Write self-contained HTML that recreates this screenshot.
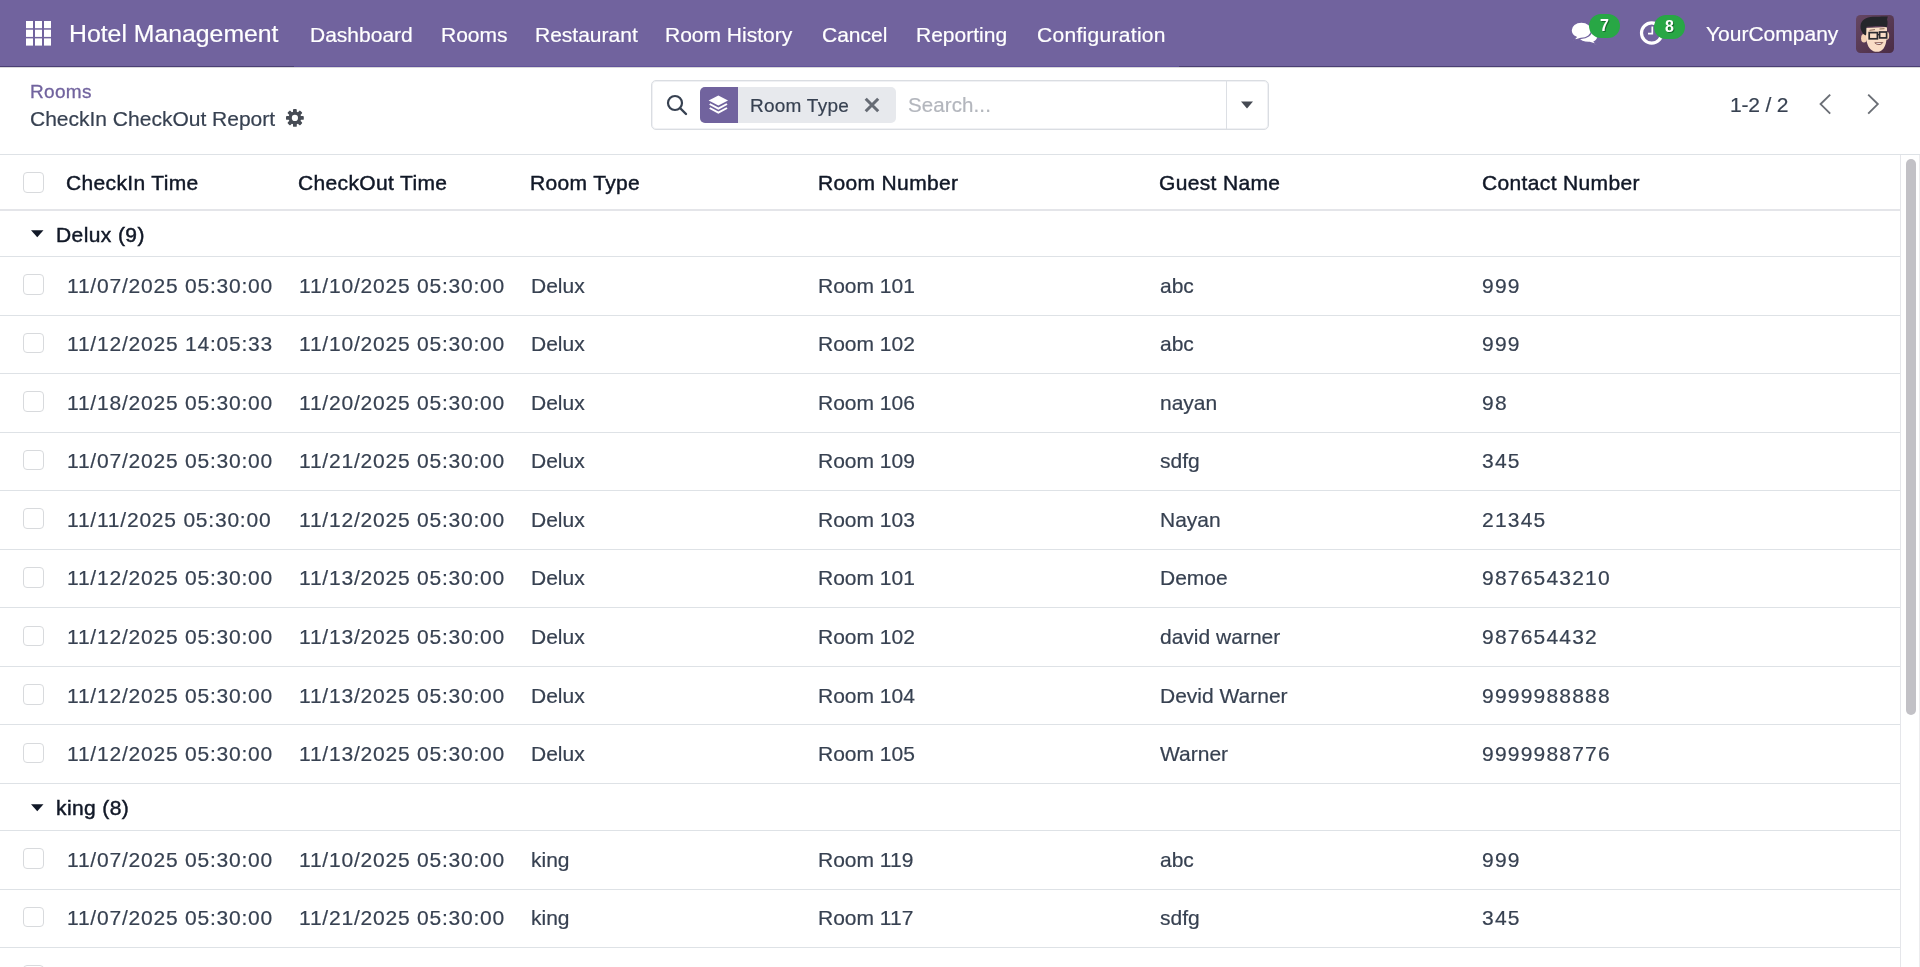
<!DOCTYPE html>
<html><head><meta charset="utf-8">
<style>
html,body{margin:0;padding:0;}
body{width:1920px;height:967px;overflow:hidden;position:relative;background:#fff;font-family:"Liberation Sans",sans-serif;color:#374151;}
.t{position:absolute;line-height:1;white-space:nowrap;will-change:transform;-webkit-text-stroke-width:0.2px;}
#nav{position:absolute;left:0;top:0;width:1920px;height:66px;background:#71639e;}
#navline{position:absolute;left:0;top:66px;width:1920px;height:1px;background:#4a3f74;}
#navshadow{position:absolute;left:0;top:67px;width:1920px;height:1px;background:#d9d9da;}
.cb{position:absolute;left:23px;width:18.6px;height:18.6px;border:1px solid #d8dadd;border-radius:4px;background:#fff;}
.hd{-webkit-text-stroke:0.45px #111827;}
.gp{-webkit-text-stroke:0.45px #111827;}
.badge{position:absolute;will-change:transform;width:31px;height:24px;border-radius:12px;background:#28a745;color:#fff;font-weight:bold;font-size:16px;line-height:24px;text-align:center;text-shadow:1px 1px 0 #146c2b;}
</style></head><body>
<div id="nav"></div><div id="navline"></div><div id="navshadow"></div><div style="position:absolute;left:294px;top:66px;width:885px;height:1px;background:#62549a;"></div>
<svg style="position:absolute;left:26px;top:21px" width="25" height="25" viewBox="0 0 25 25"><rect x="0" y="0.0" width="7" height="7.2" fill="#fff"/><rect x="9" y="0.0" width="7" height="7.2" fill="#fff"/><rect x="18" y="0.0" width="7" height="7.2" fill="#fff"/><rect x="0" y="8.7" width="7" height="7.2" fill="#fff"/><rect x="9" y="8.7" width="7" height="7.2" fill="#fff"/><rect x="18" y="8.7" width="7" height="7.2" fill="#fff"/><rect x="0" y="17.4" width="7" height="7.2" fill="#fff"/><rect x="9" y="17.4" width="7" height="7.2" fill="#fff"/><rect x="18" y="17.4" width="7" height="7.2" fill="#fff"/></svg>
<div class="t " style="left:68.90px;top:21.50px;font-size:24.8px;color:#fff;">Hotel Management</div>
<div class="t " style="left:309.50px;top:23.72px;font-size:21px;color:#fff;">Dashboard</div>
<div class="t " style="left:441.20px;top:23.72px;font-size:21px;color:#fff;">Rooms</div>
<div class="t " style="left:534.50px;top:23.72px;font-size:21px;color:#fff;">Restaurant</div>
<div class="t " style="left:665.30px;top:23.72px;font-size:21px;color:#fff;">Room History</div>
<div class="t " style="left:821.80px;top:23.72px;font-size:21px;color:#fff;">Cancel</div>
<div class="t " style="left:915.80px;top:23.72px;font-size:21px;color:#fff;">Reporting</div>
<div class="t " style="left:1036.80px;top:23.72px;font-size:21px;color:#fff;letter-spacing:0.3px;">Configuration</div>
<div class="t " style="left:1705.50px;top:23.22px;font-size:21px;color:#fff;">YourCompany</div>
<div class="t " style="left:29.50px;top:82.01px;font-size:19px;color:#71639e;letter-spacing:0.3px;-webkit-text-stroke:0.3px #71639e;">Rooms</div>
<div class="t " style="left:29.50px;top:107.52px;font-size:21px;color:#374151;">CheckIn CheckOut Report</div>
<svg style="position:absolute;left:280px;top:104px" width="30" height="28" viewBox="0 0 30 28"><g transform="translate(14.9 13.9)" fill="#474c55"><circle r="6.4"/><rect x="-1.9" y="-8.9" width="3.8" height="5" rx="0.9" transform="rotate(0)"/><rect x="-1.9" y="-8.9" width="3.8" height="5" rx="0.9" transform="rotate(45)"/><rect x="-1.9" y="-8.9" width="3.8" height="5" rx="0.9" transform="rotate(90)"/><rect x="-1.9" y="-8.9" width="3.8" height="5" rx="0.9" transform="rotate(135)"/><rect x="-1.9" y="-8.9" width="3.8" height="5" rx="0.9" transform="rotate(180)"/><rect x="-1.9" y="-8.9" width="3.8" height="5" rx="0.9" transform="rotate(225)"/><rect x="-1.9" y="-8.9" width="3.8" height="5" rx="0.9" transform="rotate(270)"/><rect x="-1.9" y="-8.9" width="3.8" height="5" rx="0.9" transform="rotate(315)"/></g><circle cx="14.9" cy="13.9" r="3.1" fill="#fff"/></svg>
<div style="position:absolute;left:651px;top:79.5px;width:616px;height:48.5px;border:1px solid #dadde2;border-radius:5px;background:#fff;box-shadow:inset 0 0 0 1px #f0f1f4;"></div>
<div style="position:absolute;left:1225.5px;top:80px;width:1.5px;height:49px;background:#dcdfe4;"></div>
<svg style="position:absolute;left:666px;top:94px" width="22" height="22" viewBox="0 0 22 22"><circle cx="9" cy="9" r="7" fill="none" stroke="#374151" stroke-width="2.2"/><line x1="14" y1="14" x2="20" y2="20" stroke="#374151" stroke-width="2.4" stroke-linecap="round"/></svg>
<div style="position:absolute;left:699.5px;top:87px;width:196px;height:36px;border-radius:5px;background:#e7e9ed;overflow:hidden;"><div style="position:absolute;left:0;top:0;width:38.5px;height:36px;background:#71639e;"></div></div>
<svg style="position:absolute;left:707.2px;top:94px" width="22.7" height="21" viewBox="0 0 21 21" preserveAspectRatio="none"><path fill="#fff" d="M10.5 1.5 L19.5 6.5 L10.5 11.5 L1.5 6.5 Z"/><path fill="none" stroke="#fff" stroke-width="2" d="M2.5 10 L10.5 14.5 L18.5 10"/><path fill="none" stroke="#fff" stroke-width="2" d="M2.5 14 L10.5 18.5 L18.5 14"/></svg>
<div class="t " style="left:749.50px;top:95.61px;font-size:19px;color:#374151;letter-spacing:0.25px;">Room Type</div>
<svg style="position:absolute;left:864.3px;top:96.8px" width="16" height="16" viewBox="0 0 16 16"><path d="M1.7 1.7 L14.2 14.2 M14.2 1.7 L1.7 14.2" stroke="#666b74" stroke-width="3"/></svg>
<div class="t " style="left:907.80px;top:95.14px;font-size:20.5px;color:#b3b6bd;letter-spacing:0.1px;">Search...</div>
<svg style="position:absolute;left:1241px;top:101px" width="12" height="8" viewBox="0 0 12 8"><path d="M0 0.5 L12 0.5 L6 7.5 Z" fill="#454a53"/></svg>
<div class="t " style="left:1729.50px;top:93.72px;font-size:21px;color:#374151;letter-spacing:-0.2px;">1-2 / 2</div>
<svg style="position:absolute;left:1818px;top:93px" width="14" height="22" viewBox="0 0 14 22"><path d="M12.2 1.6 L2.6 11.1 L12.2 20.6" fill="none" stroke="#6b6f76" stroke-width="1.9"/></svg>
<svg style="position:absolute;left:1866px;top:93px" width="14" height="22" viewBox="0 0 14 22"><path d="M2.2 1.6 L11.8 11.1 L2.2 20.6" fill="none" stroke="#6b6f76" stroke-width="1.9"/></svg>
<div style="position:absolute;left:0;top:154px;width:1920px;height:1px;background:#dee2e6;"></div>
<div style="position:absolute;left:0;top:153px;width:1920px;height:1px;background:#fff;"></div>
<div style="position:absolute;left:0;top:209px;width:1900px;height:2px;background:#e4e5e9;"></div>
<div class="cb" style="top:172.00px"></div>
<div class="t hd" style="left:66.00px;top:172.22px;font-size:21px;color:#111827;letter-spacing:0.35px;">CheckIn Time</div>
<div class="t hd" style="left:298.00px;top:172.22px;font-size:21px;color:#111827;letter-spacing:0.35px;">CheckOut Time</div>
<div class="t hd" style="left:530.00px;top:172.22px;font-size:21px;color:#111827;letter-spacing:0.35px;">Room Type</div>
<div class="t hd" style="left:818.20px;top:172.22px;font-size:21px;color:#111827;letter-spacing:0.35px;">Room Number</div>
<div class="t hd" style="left:1159.20px;top:172.22px;font-size:21px;color:#111827;letter-spacing:0.35px;">Guest Name</div>
<div class="t hd" style="left:1482.20px;top:172.22px;font-size:21px;color:#111827;letter-spacing:0.35px;">Contact Number</div>
<svg style="position:absolute;left:30.5px;top:230px" width="13" height="8" viewBox="0 0 13 8"><path d="M0 0.3 L12.5 0.3 L6.25 7.3 Z" fill="#111827"/></svg><div class="t gp" style="left:56.00px;top:223.82px;font-size:21px;color:#111827;letter-spacing:0.4px;">Delux (9)</div>
<div style="position:absolute;left:0;top:256px;width:1900px;height:1px;background:#dee2e6;"></div>
<div class="cb" style="top:274.20px"></div>
<div class="t " style="left:67.00px;top:274.62px;font-size:21px;color:#374151;letter-spacing:0.78px;">11/07/2025 05:30:00</div>
<div class="t " style="left:299.00px;top:274.62px;font-size:21px;color:#374151;letter-spacing:0.78px;">11/10/2025 05:30:00</div>
<div class="t " style="left:530.50px;top:274.62px;font-size:21px;color:#374151;">Delux</div>
<div class="t " style="left:818.20px;top:274.62px;font-size:21px;color:#374151;">Room 101</div>
<div class="t " style="left:1159.50px;top:274.62px;font-size:21px;color:#374151;">abc</div>
<div class="t " style="left:1482.20px;top:274.62px;font-size:21px;color:#374151;letter-spacing:1.2px;">999</div>
<div style="position:absolute;left:0;top:315px;width:1900px;height:1px;background:#dee2e6;"></div>
<div class="cb" style="top:332.76px"></div>
<div class="t " style="left:67.00px;top:333.18px;font-size:21px;color:#374151;letter-spacing:0.78px;">11/12/2025 14:05:33</div>
<div class="t " style="left:299.00px;top:333.18px;font-size:21px;color:#374151;letter-spacing:0.78px;">11/10/2025 05:30:00</div>
<div class="t " style="left:530.50px;top:333.18px;font-size:21px;color:#374151;">Delux</div>
<div class="t " style="left:818.20px;top:333.18px;font-size:21px;color:#374151;">Room 102</div>
<div class="t " style="left:1159.50px;top:333.18px;font-size:21px;color:#374151;">abc</div>
<div class="t " style="left:1482.20px;top:333.18px;font-size:21px;color:#374151;letter-spacing:1.2px;">999</div>
<div style="position:absolute;left:0;top:373px;width:1900px;height:1px;background:#dee2e6;"></div>
<div class="cb" style="top:391.32px"></div>
<div class="t " style="left:67.00px;top:391.74px;font-size:21px;color:#374151;letter-spacing:0.78px;">11/18/2025 05:30:00</div>
<div class="t " style="left:299.00px;top:391.74px;font-size:21px;color:#374151;letter-spacing:0.78px;">11/20/2025 05:30:00</div>
<div class="t " style="left:530.50px;top:391.74px;font-size:21px;color:#374151;">Delux</div>
<div class="t " style="left:818.20px;top:391.74px;font-size:21px;color:#374151;">Room 106</div>
<div class="t " style="left:1159.50px;top:391.74px;font-size:21px;color:#374151;">nayan</div>
<div class="t " style="left:1482.20px;top:391.74px;font-size:21px;color:#374151;letter-spacing:1.2px;">98</div>
<div style="position:absolute;left:0;top:432px;width:1900px;height:1px;background:#dee2e6;"></div>
<div class="cb" style="top:449.88px"></div>
<div class="t " style="left:67.00px;top:450.30px;font-size:21px;color:#374151;letter-spacing:0.78px;">11/07/2025 05:30:00</div>
<div class="t " style="left:299.00px;top:450.30px;font-size:21px;color:#374151;letter-spacing:0.78px;">11/21/2025 05:30:00</div>
<div class="t " style="left:530.50px;top:450.30px;font-size:21px;color:#374151;">Delux</div>
<div class="t " style="left:818.20px;top:450.30px;font-size:21px;color:#374151;">Room 109</div>
<div class="t " style="left:1159.50px;top:450.30px;font-size:21px;color:#374151;">sdfg</div>
<div class="t " style="left:1482.20px;top:450.30px;font-size:21px;color:#374151;letter-spacing:1.2px;">345</div>
<div style="position:absolute;left:0;top:490px;width:1900px;height:1px;background:#dee2e6;"></div>
<div class="cb" style="top:508.44px"></div>
<div class="t " style="left:67.00px;top:508.86px;font-size:21px;color:#374151;letter-spacing:0.78px;">11/11/2025 05:30:00</div>
<div class="t " style="left:299.00px;top:508.86px;font-size:21px;color:#374151;letter-spacing:0.78px;">11/12/2025 05:30:00</div>
<div class="t " style="left:530.50px;top:508.86px;font-size:21px;color:#374151;">Delux</div>
<div class="t " style="left:818.20px;top:508.86px;font-size:21px;color:#374151;">Room 103</div>
<div class="t " style="left:1159.50px;top:508.86px;font-size:21px;color:#374151;">Nayan</div>
<div class="t " style="left:1482.20px;top:508.86px;font-size:21px;color:#374151;letter-spacing:1.2px;">21345</div>
<div style="position:absolute;left:0;top:549px;width:1900px;height:1px;background:#dee2e6;"></div>
<div class="cb" style="top:567.00px"></div>
<div class="t " style="left:67.00px;top:567.42px;font-size:21px;color:#374151;letter-spacing:0.78px;">11/12/2025 05:30:00</div>
<div class="t " style="left:299.00px;top:567.42px;font-size:21px;color:#374151;letter-spacing:0.78px;">11/13/2025 05:30:00</div>
<div class="t " style="left:530.50px;top:567.42px;font-size:21px;color:#374151;">Delux</div>
<div class="t " style="left:818.20px;top:567.42px;font-size:21px;color:#374151;">Room 101</div>
<div class="t " style="left:1159.50px;top:567.42px;font-size:21px;color:#374151;">Demoe</div>
<div class="t " style="left:1482.20px;top:567.42px;font-size:21px;color:#374151;letter-spacing:1.2px;">9876543210</div>
<div style="position:absolute;left:0;top:607px;width:1900px;height:1px;background:#dee2e6;"></div>
<div class="cb" style="top:625.56px"></div>
<div class="t " style="left:67.00px;top:625.98px;font-size:21px;color:#374151;letter-spacing:0.78px;">11/12/2025 05:30:00</div>
<div class="t " style="left:299.00px;top:625.98px;font-size:21px;color:#374151;letter-spacing:0.78px;">11/13/2025 05:30:00</div>
<div class="t " style="left:530.50px;top:625.98px;font-size:21px;color:#374151;">Delux</div>
<div class="t " style="left:818.20px;top:625.98px;font-size:21px;color:#374151;">Room 102</div>
<div class="t " style="left:1159.50px;top:625.98px;font-size:21px;color:#374151;">david warner</div>
<div class="t " style="left:1482.20px;top:625.98px;font-size:21px;color:#374151;letter-spacing:1.2px;">987654432</div>
<div style="position:absolute;left:0;top:666px;width:1900px;height:1px;background:#dee2e6;"></div>
<div class="cb" style="top:684.12px"></div>
<div class="t " style="left:67.00px;top:684.54px;font-size:21px;color:#374151;letter-spacing:0.78px;">11/12/2025 05:30:00</div>
<div class="t " style="left:299.00px;top:684.54px;font-size:21px;color:#374151;letter-spacing:0.78px;">11/13/2025 05:30:00</div>
<div class="t " style="left:530.50px;top:684.54px;font-size:21px;color:#374151;">Delux</div>
<div class="t " style="left:818.20px;top:684.54px;font-size:21px;color:#374151;">Room 104</div>
<div class="t " style="left:1159.50px;top:684.54px;font-size:21px;color:#374151;">Devid Warner</div>
<div class="t " style="left:1482.20px;top:684.54px;font-size:21px;color:#374151;letter-spacing:1.2px;">9999988888</div>
<div style="position:absolute;left:0;top:724px;width:1900px;height:1px;background:#dee2e6;"></div>
<div class="cb" style="top:742.68px"></div>
<div class="t " style="left:67.00px;top:743.10px;font-size:21px;color:#374151;letter-spacing:0.78px;">11/12/2025 05:30:00</div>
<div class="t " style="left:299.00px;top:743.10px;font-size:21px;color:#374151;letter-spacing:0.78px;">11/13/2025 05:30:00</div>
<div class="t " style="left:530.50px;top:743.10px;font-size:21px;color:#374151;">Delux</div>
<div class="t " style="left:818.20px;top:743.10px;font-size:21px;color:#374151;">Room 105</div>
<div class="t " style="left:1159.50px;top:743.10px;font-size:21px;color:#374151;">Warner</div>
<div class="t " style="left:1482.20px;top:743.10px;font-size:21px;color:#374151;letter-spacing:1.2px;">9999988776</div>
<div style="position:absolute;left:0;top:783px;width:1900px;height:1px;background:#dee2e6;"></div>
<svg style="position:absolute;left:30.5px;top:803.5px" width="13" height="8" viewBox="0 0 13 8"><path d="M0 0.3 L12.5 0.3 L6.25 7.3 Z" fill="#111827"/></svg><div class="t gp" style="left:56.00px;top:797.32px;font-size:21px;color:#111827;letter-spacing:0.4px;">king (8)</div>
<div style="position:absolute;left:0;top:830px;width:1900px;height:1px;background:#dee2e6;"></div>
<div class="cb" style="top:848.20px"></div>
<div class="t " style="left:67.00px;top:848.62px;font-size:21px;color:#374151;letter-spacing:0.78px;">11/07/2025 05:30:00</div>
<div class="t " style="left:299.00px;top:848.62px;font-size:21px;color:#374151;letter-spacing:0.78px;">11/10/2025 05:30:00</div>
<div class="t " style="left:530.50px;top:848.62px;font-size:21px;color:#374151;">king</div>
<div class="t " style="left:818.20px;top:848.62px;font-size:21px;color:#374151;">Room 119</div>
<div class="t " style="left:1159.50px;top:848.62px;font-size:21px;color:#374151;">abc</div>
<div class="t " style="left:1482.20px;top:848.62px;font-size:21px;color:#374151;letter-spacing:1.2px;">999</div>
<div style="position:absolute;left:0;top:889px;width:1900px;height:1px;background:#dee2e6;"></div>
<div class="cb" style="top:906.76px"></div>
<div class="t " style="left:67.00px;top:907.18px;font-size:21px;color:#374151;letter-spacing:0.78px;">11/07/2025 05:30:00</div>
<div class="t " style="left:299.00px;top:907.18px;font-size:21px;color:#374151;letter-spacing:0.78px;">11/21/2025 05:30:00</div>
<div class="t " style="left:530.50px;top:907.18px;font-size:21px;color:#374151;">king</div>
<div class="t " style="left:818.20px;top:907.18px;font-size:21px;color:#374151;">Room 117</div>
<div class="t " style="left:1159.50px;top:907.18px;font-size:21px;color:#374151;">sdfg</div>
<div class="t " style="left:1482.20px;top:907.18px;font-size:21px;color:#374151;letter-spacing:1.2px;">345</div>
<div style="position:absolute;left:0;top:947px;width:1900px;height:1px;background:#dee2e6;"></div>
<div class="cb" style="top:965.32px"></div>
<div style="position:absolute;left:0;top:1006px;width:1900px;height:1px;background:#dee2e6;"></div>
<div style="position:absolute;left:1900px;top:155px;width:1px;height:812px;background:#e5e6ea;"></div>
<div style="position:absolute;left:1919px;top:155px;width:1px;height:812px;background:#ececee;"></div>
<div style="position:absolute;left:1905.5px;top:159px;width:10.5px;height:556px;border-radius:5.25px;background:#c2c1c6;"></div>
<svg style="position:absolute;left:1566px;top:10px" width="60" height="40" viewBox="0 0 60 40"><path fill="#fff" stroke="#71639e" stroke-width="1.3" d="M23.5 18.5 C28.5 19 32 22 32 26 C32 28.5 30.5 30.6 28.3 31.8 L31.3 34.3 C28.5 34.2 25.5 33.2 23.5 32.4 C18 32.6 14 30.8 12.5 28 Z"/><path fill="#fff" stroke="#71639e" stroke-width="1.3" d="M15.4 12 C9.6 12 5.1 15.6 5.1 20.2 C5.1 23.2 7 25.8 10 27.2 L7.2 30.2 C10 30 13 29 15 28.3 C21.2 28.3 25.6 24.8 25.6 20.2 C25.6 15.6 21.2 12 15.4 12 Z"/></svg>
<div class="badge" style="left:1589.2px;top:13.9px;">7</div>
<svg style="position:absolute;left:1634px;top:10px" width="30" height="40" viewBox="0 0 30 40"><circle cx="17.7" cy="23" r="10.2" fill="none" stroke="#fff" stroke-width="3.2"/><path d="M18.3 16.5 L18.3 23.6 L14 23.6" fill="none" stroke="#fff" stroke-width="1.7"/></svg>
<div class="badge" style="left:1654.3px;top:14.9px;">8</div>
<svg style="position:absolute;left:1856px;top:14.7px" width="38" height="38" viewBox="0 0 38 38"><defs><linearGradient id="ag" x1="0" y1="0" x2="1" y2="1"><stop offset="0" stop-color="#654662"/><stop offset="1" stop-color="#4b2d45"/></linearGradient><clipPath id="ac"><rect x="0" y="0" width="38" height="38" rx="4.5"/></clipPath></defs><g clip-path="url(#ac)"><rect x="0" y="0" width="38" height="38" fill="url(#ag)"/><ellipse cx="8" cy="23.3" rx="2.9" ry="4.3" fill="#f3d0b4"/><ellipse cx="30.8" cy="20.8" rx="2.4" ry="4" fill="#f3d0b4"/><path d="M9.8 13 C9.5 22 10 36.8 21 36.8 C30.5 36.8 31.2 24 31 12 Z" fill="#f9ddc6"/><path d="M4.5 11 C5 5 10 2 17 1.8 C23 1.5 28 1.2 31.8 1.5 L31 4.5 C32 7 31.5 10 30.8 12.5 C27 11 22 10.8 16.5 11.5 L10.5 11.8 C10.2 14.5 10.5 18 10 20.5 L8 19.5 C5.5 17 4.3 14 4.5 11 Z" fill="#25262b"/><path d="M13.5 15.3 L19 14.6 M23.5 14 L28.5 13.7" stroke="#6b4a3a" stroke-width="0.8"/><rect x="13.2" y="17.6" width="8.2" height="6.2" fill="none" stroke="#2b2b30" stroke-width="1.7"/><rect x="23.6" y="17" width="7" height="5.9" fill="none" stroke="#2b2b30" stroke-width="1.7"/><path d="M21.4 19.8 L23.6 19.6" stroke="#2b2b30" stroke-width="1.4"/><path d="M18.8 27.8 C21 30.2 25 30.2 26.8 27.6 Z" fill="#fff" stroke="#7a4a44" stroke-width="0.9"/></g></svg>
</body></html>
